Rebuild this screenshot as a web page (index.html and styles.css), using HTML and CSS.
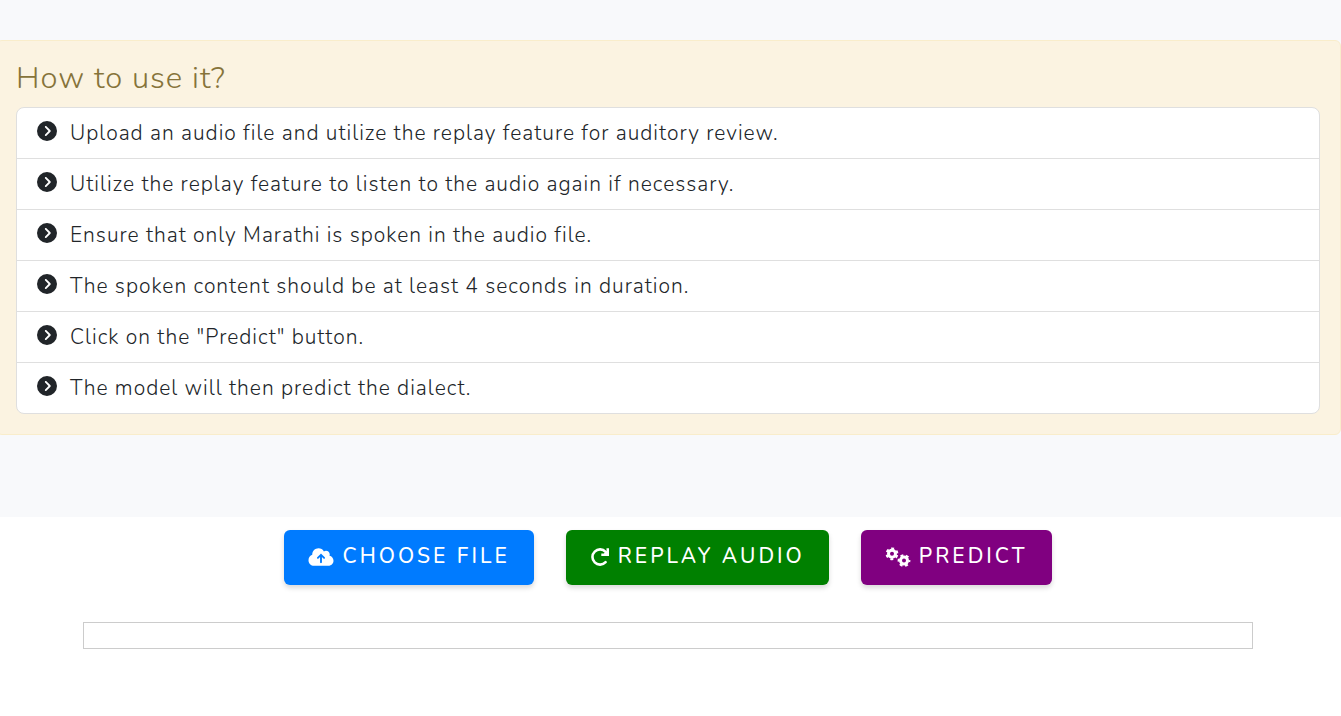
FILE: index.html
```html
<!DOCTYPE html>
<html lang="en">
<head>
<meta charset="utf-8">
<meta name="viewport" content="width=device-width, initial-scale=1">
<title>Dialect prediction</title>
<link rel="stylesheet" href="styles.css">
</head>
<body>
<svg class="sprite" aria-hidden="true">
  <symbol id="chevron" viewBox="0 0 512 512"><path d="M0 256a256 256 0 1 0 512 0A256 256 0 1 0 0 256zM241 377c-9.4 9.4-24.6 9.4-33.9 0s-9.4-24.6 0-33.9l87-87-87-87c-9.4-9.4-9.4-24.6 0-33.9s24.6-9.4 33.9 0L345 239c9.4 9.4 9.4 24.6 0 33.9L241 377z"/></symbol>
</svg>
<section class="guide">
  <div class="notice">
    <h2 class="notice-title">How to use it?</h2>
    <ul class="steps">
      <li class="step"><svg class="step-icon"><use href="#chevron"/></svg><span>Upload an audio file and utilize the replay feature for auditory review.</span></li>
      <li class="step"><svg class="step-icon"><use href="#chevron"/></svg><span>Utilize the replay feature to listen to the audio again if necessary.</span></li>
      <li class="step"><svg class="step-icon"><use href="#chevron"/></svg><span>Ensure that only Marathi is spoken in the audio file.</span></li>
      <li class="step"><svg class="step-icon"><use href="#chevron"/></svg><span>The spoken content should be at least 4 seconds in duration.</span></li>
      <li class="step"><svg class="step-icon"><use href="#chevron"/></svg><span>Click on the "Predict" button.</span></li>
      <li class="step"><svg class="step-icon"><use href="#chevron"/></svg><span>The model will then predict the dialect.</span></li>
    </ul>
  </div>
</section>
<main class="workspace">
  <div class="actions">
    <button class="action action-choose" type="button">
      <svg class="icon-wide" viewBox="0 0 640 512" aria-hidden="true"><path d="M144 480C64.500 480 0 415.500 0 336c0-62.800 40.200-116.200 96.200-135.900c-.1-2.700-.2-5.400-.2-8.100c0-88.400 71.600-160 160-160c59.300 0 111 32.200 138.700 80.200C409.900 102 428.300 96 448 96c53 0 96 43 96 96c0 12.200-2.300 23.800-6.400 34.600C596 238.400 640 290.100 640 352c0 70.700-57.300 128-128 128H144zm79-217c-9.400 9.400-9.400 24.600 0 33.900s24.600 9.400 33.900 0l39-39V392c0 13.300 10.700 24 24 24s24-10.700 24-24V257.900l39 39c9.400 9.400 24.600 9.400 33.900 0s9.400-24.600 0-33.900l-80-80c-9.400-9.400-24.600-9.400-33.900 0l-80 80z"/></svg>
      <span>CHOOSE FILE</span>
    </button>
    <button class="action action-replay" type="button">
      <svg class="icon" viewBox="0 0 20 20" aria-hidden="true"><path d="M15.600 15.200A7.600 7.600 0 1 1 15.600 4.800L17 6.200" fill="none" stroke="currentColor" stroke-width="2.600" stroke-linecap="round"/><path d="M19 1.200v7.700h-7.700v-2.400h2.600l2.600-2.600v-2.700z"/></svg>
      <span>REPLAY AUDIO</span>
    </button>
    <button class="action action-predict" type="button">
      <svg class="icon-wide" viewBox="0 0 25 20" aria-hidden="true">
        <g fill="none" stroke="currentColor"><circle cx="6.500" cy="6.800" r="3.500" stroke-width="3"/><circle cx="6.500" cy="6.800" r="5.400" stroke-width="2" stroke-dasharray="2.900 2.755" stroke-dashoffset="4.300"/><circle cx="18.500" cy="13.600" r="3.500" stroke-width="3"/><circle cx="18.500" cy="13.600" r="5.400" stroke-width="2" stroke-dasharray="2.900 2.755" stroke-dashoffset="1.450"/></g>
      </svg>
      <span>PREDICT</span>
    </button>
  </div>
  <div class="result"></div>
</main>
</body>
</html>
```
FILE: styles.css
```css
* { box-sizing: border-box; }
body {
  margin: 0;
  background: #fff;
  color: #212529;
  font-family: Nunito, "Open Sans", "Noto Sans", sans-serif;
  font-weight: 300;
  letter-spacing: 1px;
}
.sprite { display: none; }
svg { fill: currentColor; flex: none; }
.guide { padding: 40px 0 82px; background: #f8f9fb; overflow: hidden; }
.notice {
  margin-left: -4px;
  padding: 20px 20px 20px 19px;
  border: 1px solid #f9edcb;
  border-radius: 6px;
  background: #fbf3e1;
}
.notice-title {
  margin: 0 0 12px;
  color: #86733a;
  font-size: 31px;
  font-weight: 300;
  line-height: 34px;
}
.steps {
  margin: 0;
  padding: 0;
  list-style: none;
  border: 1px solid #dfdfdf;
  border-radius: 8px;
  background: #fff;
}
.step {
  display: flex;
  align-items: center;
  gap: 13px;
  padding: 10px 20px;
  font-size: 21px;
  line-height: 30px;
}
.step + .step { border-top: 1px solid #dfdfdf; }
.step-icon { width: 20px; height: 20px; margin-bottom: 4px; }
.workspace { padding: 13px 88px 67px 83px; }
.actions { display: flex; flex-wrap: wrap; justify-content: center; gap: 32px; }
.action {
  display: flex;
  align-items: center;
  gap: 8px;
  padding: 11px 24px 13px;
  border: 0;
  border-radius: 6px;
  color: #fff;
  font-family: Nunito, "Open Sans", "Noto Sans", sans-serif;
  font-size: 21px;
  font-weight: 500;
  line-height: 31px;
  letter-spacing: 3px;
  box-shadow: 0 3px 5px rgba(0, 0, 0, 0.15);
  cursor: pointer;
}
.action-choose { background: #007bff; }
.action-replay { background: #008000; }
.action-predict { background: #800080; }
.icon { width: 20px; height: 20px; }
.icon-wide { width: 26px; height: 20px; }
.result { height: 27px; margin-top: 37px; border: 1px solid #ccc; }
```
